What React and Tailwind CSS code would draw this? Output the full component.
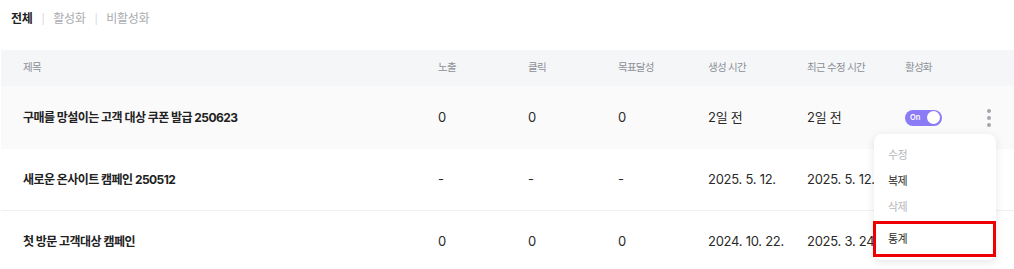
import React from "react";

const font = { fontFamily: 'Inter, "Noto Sans CJK KR", sans-serif' };

const rows = [
  { title: "구매를 망설이는 고객 대상 쿠폰 발급 250623", a: "0", b: "0", c: "0", created: "2일 전", updated: "2일 전", hover: true, toggle: true },
  { title: "새로운 온사이트 캠페인 250512", a: "-", b: "-", c: "-", created: "2025. 5. 12.", updated: "2025. 5. 12." },
  { title: "첫 방문 고객대상 캠페인", a: "0", b: "0", c: "0", created: "2024. 10. 22.", updated: "2025. 3. 24." },
];

const cols = "grid grid-cols-[437px_90px_90px_90px_99px_98px_82px_1fr] items-center";

function Kebab() {
  return (
    <div className="flex flex-col items-center gap-[3px] w-[4px]">
      <span className="w-[4px] h-[4px] rounded-full bg-[#a3a6ad]" />
      <span className="w-[4px] h-[4px] rounded-full bg-[#a3a6ad]" />
      <span className="w-[4px] h-[4px] rounded-full bg-[#a3a6ad]" />
    </div>
  );
}

function Toggle() {
  return (
    <div className="relative w-[37px] h-[16px] rounded-full bg-[#8b7bf5] flex items-center">
      <span className="ml-[5px] text-[7.5px] font-semibold text-white leading-none">On</span>
      <span className="absolute right-[2px] top-[1.5px] w-[13px] h-[13px] rounded-full bg-white" />
    </div>
  );
}

export default function App() {
  return (
    <div className="relative w-[1014px] h-[269px] bg-white overflow-hidden" style={font}>
      <div className="h-[50px] pt-[11px] pl-[11px] flex items-start gap-[9px] text-[12px] leading-[16px] tracking-[-0.03em]">
        <span className="font-bold text-[#1f1f1f]">전체</span>
        <span className="text-[#d5d5d8] text-[10px]">|</span>
        <span className="text-[#a9abb0]">활성화</span>
        <span className="text-[#d5d5d8] text-[10px]">|</span>
        <span className="text-[#a9abb0]">비활성화</span>
      </div>

      <div className="ml-[1px]">
        <div className={`${cols} h-[36px] bg-[#f5f6f8] text-[10.5px] tracking-[-0.07em] text-[#8c9097]`}>
          <div className="pl-[22px]">제목</div>
          <div>노출</div>
          <div>클릭</div>
          <div>목표달성</div>
          <div>생성 시간</div>
          <div>최근 수정 시간</div>
          <div>활성화</div>
          <div />
        </div>
        {rows.map((r, i) => (
          <div
            key={i}
            className={`${cols} text-[13px] text-[#2a2a2a] ${r.hover ? "bg-[#fafafb] h-[63px]" : "h-[62px]"} ${i === 1 ? "border-b border-[#f0f0f2]" : ""}`}
          >
            <div className="pl-[22px] font-bold text-[#222] text-[12px] tracking-[-0.045em]">{r.title}</div>
            <div>{r.a}</div>
            <div>{r.b}</div>
            <div>{r.c}</div>
            <div className="tracking-[-0.02em]">{r.created}</div>
            <div className="tracking-[-0.02em]">{r.updated}</div>
            <div>{r.toggle ? <Toggle /> : null}</div>
            <div className="flex justify-start">{r.toggle ? <Kebab /> : null}</div>
          </div>
        ))}
      </div>

      <div className="absolute left-[874px] top-[134px] w-[122px] h-[126px] bg-white rounded-[8px] shadow-[0_2px_10px_rgba(0,0,0,0.1)] pt-[8px] text-[11px] tracking-[-0.05em]">
        <div className="h-[26px] flex items-center pl-[14px] text-[#b4b6ba]">수정</div>
        <div className="h-[26px] flex items-center pl-[14px] text-[#2a2a2a]">복제</div>
        <div className="h-[26px] flex items-center pl-[14px] text-[#b4b6ba]">삭제</div>
      </div>
      <div className="absolute left-[873px] top-[221px] w-[123px] h-[36px] border-[3px] border-[#ee0000] flex items-center pl-[12px] text-[11px] tracking-[-0.05em] text-[#2a2a2a]">
        통계
      </div>
    </div>
  );
}
